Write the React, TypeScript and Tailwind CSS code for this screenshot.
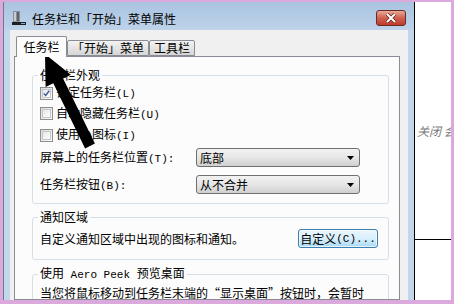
import React from "react";

// half-width latin, like SimSun's
const Lat = ({ children }: { children: React.ReactNode }) => (
  <span className="font-['Liberation_Mono',monospace] text-[11px]">{children}</span>
);

const CheckBox = ({ checked, label }: { checked?: boolean; label: React.ReactNode }) => (
  <div className="flex items-center gap-[3px]">
    <div className="w-[13px] h-[13px] border border-[#8e8f8f] bg-gradient-to-br from-[#dcdcdc] to-[#fbfbfb] p-[1px]">
      <div className="w-full h-full border border-[#c6c6c6] bg-gradient-to-br from-[#e6e6e6] to-[#ffffff] flex items-center justify-center">
        {checked && (
          <svg width="9" height="9" viewBox="0 0 9 9">
            <path d="M1 4.5 L3.5 7 L8 1" stroke="#3e5696" strokeWidth="1.8" fill="none" />
          </svg>
        )}
      </div>
    </div>
    <span>{label}</span>
  </div>
);

const Select = ({ value }: { value: string }) => (
  <div className="w-[164px] h-[19px] border border-[#707070] rounded-[3px] bg-gradient-to-b from-[#f2f2f2] via-[#e6e6e6] to-[#d0d0d0] flex items-center justify-between pl-[3px] pr-[5px]">
    <span>{value}</span>
    <svg width="7" height="4" viewBox="0 0 7 4">
      <path d="M0 0H7L3.5 4Z" fill="#000" />
    </svg>
  </div>
);

const Tab = ({ label, active, w }: { label: string; active?: boolean; w: string }) =>
  active ? (
    <div className={`${w} h-[21px] border border-b-0 border-[#898c95] bg-[#fcfcfc] rounded-t-[2px] flex items-center justify-center`}>
      {label}
    </div>
  ) : (
    <div className={`${w} h-[16px] mb-[1px] border border-[#898c95] bg-gradient-to-b from-[#f3f3f3] to-[#d6d6d6] rounded-t-[2px] flex items-center justify-center`}>
      {label}
    </div>
  );

export default function App() {
  return (
    <div className="relative w-[454px] h-[304px] overflow-hidden bg-[#dba9db] pl-[3px] pr-[3px] pt-[2px] pb-[4px] flex font-['Noto_Sans_CJK_SC','Liberation_Sans',sans-serif] text-[12px] leading-[14px] text-black">
      {/* WINDOW */}
      <div className="w-[411px] flex flex-col bg-[#c2d6ec] border-l border-[#6f7a86] border-r-0">
        {/* TITLE BAR */}
        <div className="h-[28px] flex items-start px-[8px] bg-gradient-to-b from-[#a9c3e0] to-[#bed3ea]">
          <svg className="mt-[9px]" width="14" height="14" viewBox="0 0 14 14">
            <rect x="1" y="0" width="7" height="11" fill="#8a8f96" />
            <rect x="2" y="1" width="2" height="9" fill="#c9ccd1" />
            <rect x="5" y="1" width="2" height="9" fill="#5d626a" />
            <rect x="0" y="11" width="14" height="3" fill="#1d1f24" />
            <rect x="9" y="12" width="4" height="1" fill="#7fb0e0" />
          </svg>
          <span className="mt-[10px] ml-[6px]">任务栏和「开始」菜单属性</span>
          <div className="ml-auto mt-[8px] w-[30px] h-[16px] rounded-[3px] border border-[#6b2a22] bg-gradient-to-b from-[#e9a898] via-[#d0604f] to-[#c0392b] flex items-center justify-center">
            <svg width="12" height="10" viewBox="0 0 12 10">
              <path d="M2 1 L10 9 M10 1 L2 9" stroke="#5a2018" strokeWidth="3.4" />
              <path d="M2 1 L10 9 M10 1 L2 9" stroke="#ffffff" strokeWidth="2" />
            </svg>
          </div>
        </div>

        {/* CLIENT */}
        <div className="flex-1 flex px-[6px] overflow-hidden">
          <div className="flex-1 bg-[#f0f0f0] pt-[6px] pl-[4px] pr-[8px] flex flex-col overflow-hidden">
            {/* TABS */}
            <div className="relative z-10 flex items-end h-[21px] pl-[2px]">
              <Tab label="任务栏" active w="w-[51px]" />
              <Tab label="「开始」菜单" w="w-[82px]" />
              <Tab label="工具栏" w="w-[46px]" />
            </div>

            {/* PANEL */}
            <div className="flex-1 -mt-px border border-[#898c95] bg-[#fcfcfc] pl-[17px] pr-[10px] overflow-hidden">
              <fieldset className="mt-[11px] border border-[#d5dfe5] rounded-[3px] px-[7px] pb-[9px]">
                <legend className="-ml-[2px] px-[2px] leading-[14px]">任务栏外观</legend>
                <div className="mt-[1px] h-[20px] flex items-center">
                  <CheckBox checked label={<>锁定任务栏<Lat>(L)</Lat></>} />
                </div>
                <div className="h-[21px] flex items-center">
                  <CheckBox label={<>自动隐藏任务栏<Lat>(U)</Lat></>} />
                </div>
                <div className="h-[22px] flex items-center">
                  <CheckBox label={<>使用小图标<Lat>(I)</Lat></>} />
                </div>
                <div className="mt-[2px] h-[19px] flex items-center">
                  <span className="w-[156px]">屏幕上的任务栏位置<Lat>(T):</Lat></span>
                  <Select value="底部" />
                </div>
                <div className="mt-[8px] h-[19px] flex items-center">
                  <span className="w-[156px]">任务栏按钮<Lat>(B):</Lat></span>
                  <Select value="从不合并" />
                </div>
              </fieldset>

              <fieldset className="mt-[6px] border border-[#d5dfe5] rounded-[3px] px-[7px] pb-[11px]">
                <legend className="-ml-[2px] px-[2px] leading-[14px]">通知区域</legend>
                <div className="mt-[5px] h-[19px] flex items-center justify-between">
                  <span>自定义通知区域中出现的图标和通知。</span>
                  <div className="mr-[3px] w-[80px] h-[19px] rounded-[3px] border border-[#3c7fb1] bg-gradient-to-b from-[#eaf6fd] via-[#d9f0fc] to-[#a7d9f5] shadow-[inset_0_0_0_1px_#ffffffaa] flex items-center justify-center">
                    自定义<Lat>(C)...</Lat>
                  </div>
                </div>
              </fieldset>

              <fieldset className="mt-[6px] border border-[#d5dfe5] rounded-[3px] px-[7px] pb-[11px]">
                <legend className="-ml-[2px] px-[2px] leading-[14px]">
                  使用<Lat> Aero Peek </Lat>预览桌面
                </legend>
                <p className="mt-[4px]">
                  当您将鼠标移动到任务栏末端的“显示桌面”按钮时，会暂时
                  <br />
                  查看桌面。
                </p>
              </fieldset>
            </div>
          </div>
        </div>
      </div>

      {/* RIGHT EDGE OF WINDOW */}
      <div className="w-px bg-black" />

      {/* BACKGROUND PAGE */}
      <div className="flex-1 bg-white flex flex-col overflow-hidden">
        <div className="mt-[122px] pl-[2px] whitespace-nowrap italic text-[12px] text-[#7a7a7a]">关闭 会</div>
        <div className="mt-[101px] h-px bg-black" />
      </div>

      {/* ANNOTATION ARROW */}
      <svg className="absolute left-0 top-0 pointer-events-none" width="454" height="304" viewBox="0 0 454 304">
        <polygon
          points="45,54 70.8,74.8 63.1,78.5 94.9,143.6 85.1,148.4 53.3,83.3 45.6,87"
          fill="#000"
        />
      </svg>
    </div>
  );
}
